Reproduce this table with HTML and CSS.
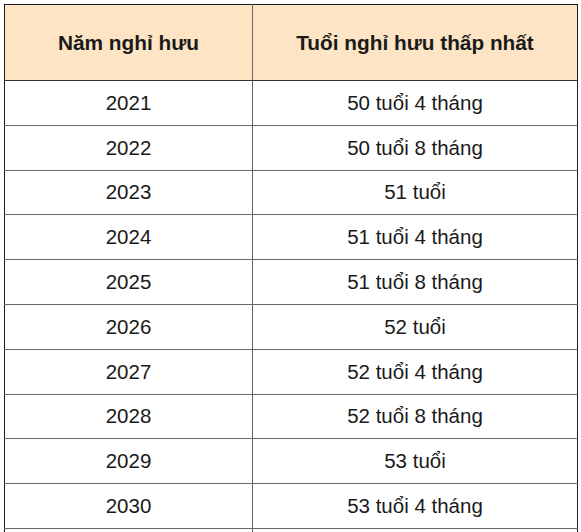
FILE: index.html
```html
<!DOCTYPE html>
<html lang="vi">
<head>
<meta charset="utf-8">
<title>Tuổi nghỉ hưu</title>
<link rel="stylesheet" href="styles.css">
</head>
<body>
<table class="retire">
  <thead>
    <tr><th class="c1">Năm nghỉ hưu</th><th class="c2">Tuổi nghỉ hưu thấp nhất</th></tr>
  </thead>
  <tbody>
    <tr><td>2021</td><td>50 tuổi 4 tháng</td></tr>
    <tr><td>2022</td><td>50 tuổi 8 tháng</td></tr>
    <tr><td>2023</td><td>51 tuổi</td></tr>
    <tr><td>2024</td><td>51 tuổi 4 tháng</td></tr>
    <tr><td>2025</td><td>51 tuổi 8 tháng</td></tr>
    <tr><td>2026</td><td>52 tuổi</td></tr>
    <tr><td>2027</td><td>52 tuổi 4 tháng</td></tr>
    <tr><td>2028</td><td>52 tuổi 8 tháng</td></tr>
    <tr><td>2029</td><td>53 tuổi</td></tr>
    <tr><td>2030</td><td>53 tuổi 4 tháng</td></tr>
    <tr class="more"><td></td><td></td></tr>
  </tbody>
</table>
</body>
</html>
```
FILE: styles.css
```css
html, body {
  margin: 0;
  padding: 0;
  background: #ffffff;
}
body {
  padding: 4px 0 0 4px;
  font-family: "Liberation Sans", Arial, sans-serif;
  color: #1a1a1a;
}
.retire {
  border-collapse: collapse;
  width: 574px;
  table-layout: fixed;
  border: 1px solid #1c1c1c;
}
.retire th,
.retire td {
  text-align: center;
  padding: 0;
  border-left: 1px solid #666;
  border-right: 1px solid #666;
  border-bottom: 1px solid #666;
}
.retire th {
  background: #fde4c4;
  font-size: 20.8px;
  font-weight: bold;
  height: 75px;
  border-bottom: 1px solid #333;
}
.retire td {
  font-size: 20.5px;
  height: 43.8px;
}
.retire .c1 {
  width: 247px;
}
.retire th:first-child,
.retire td:first-child {
  border-left: 1px solid #1c1c1c;
}
.retire th:last-child,
.retire td:last-child {
  border-right: 1px solid #1c1c1c;
}
```
